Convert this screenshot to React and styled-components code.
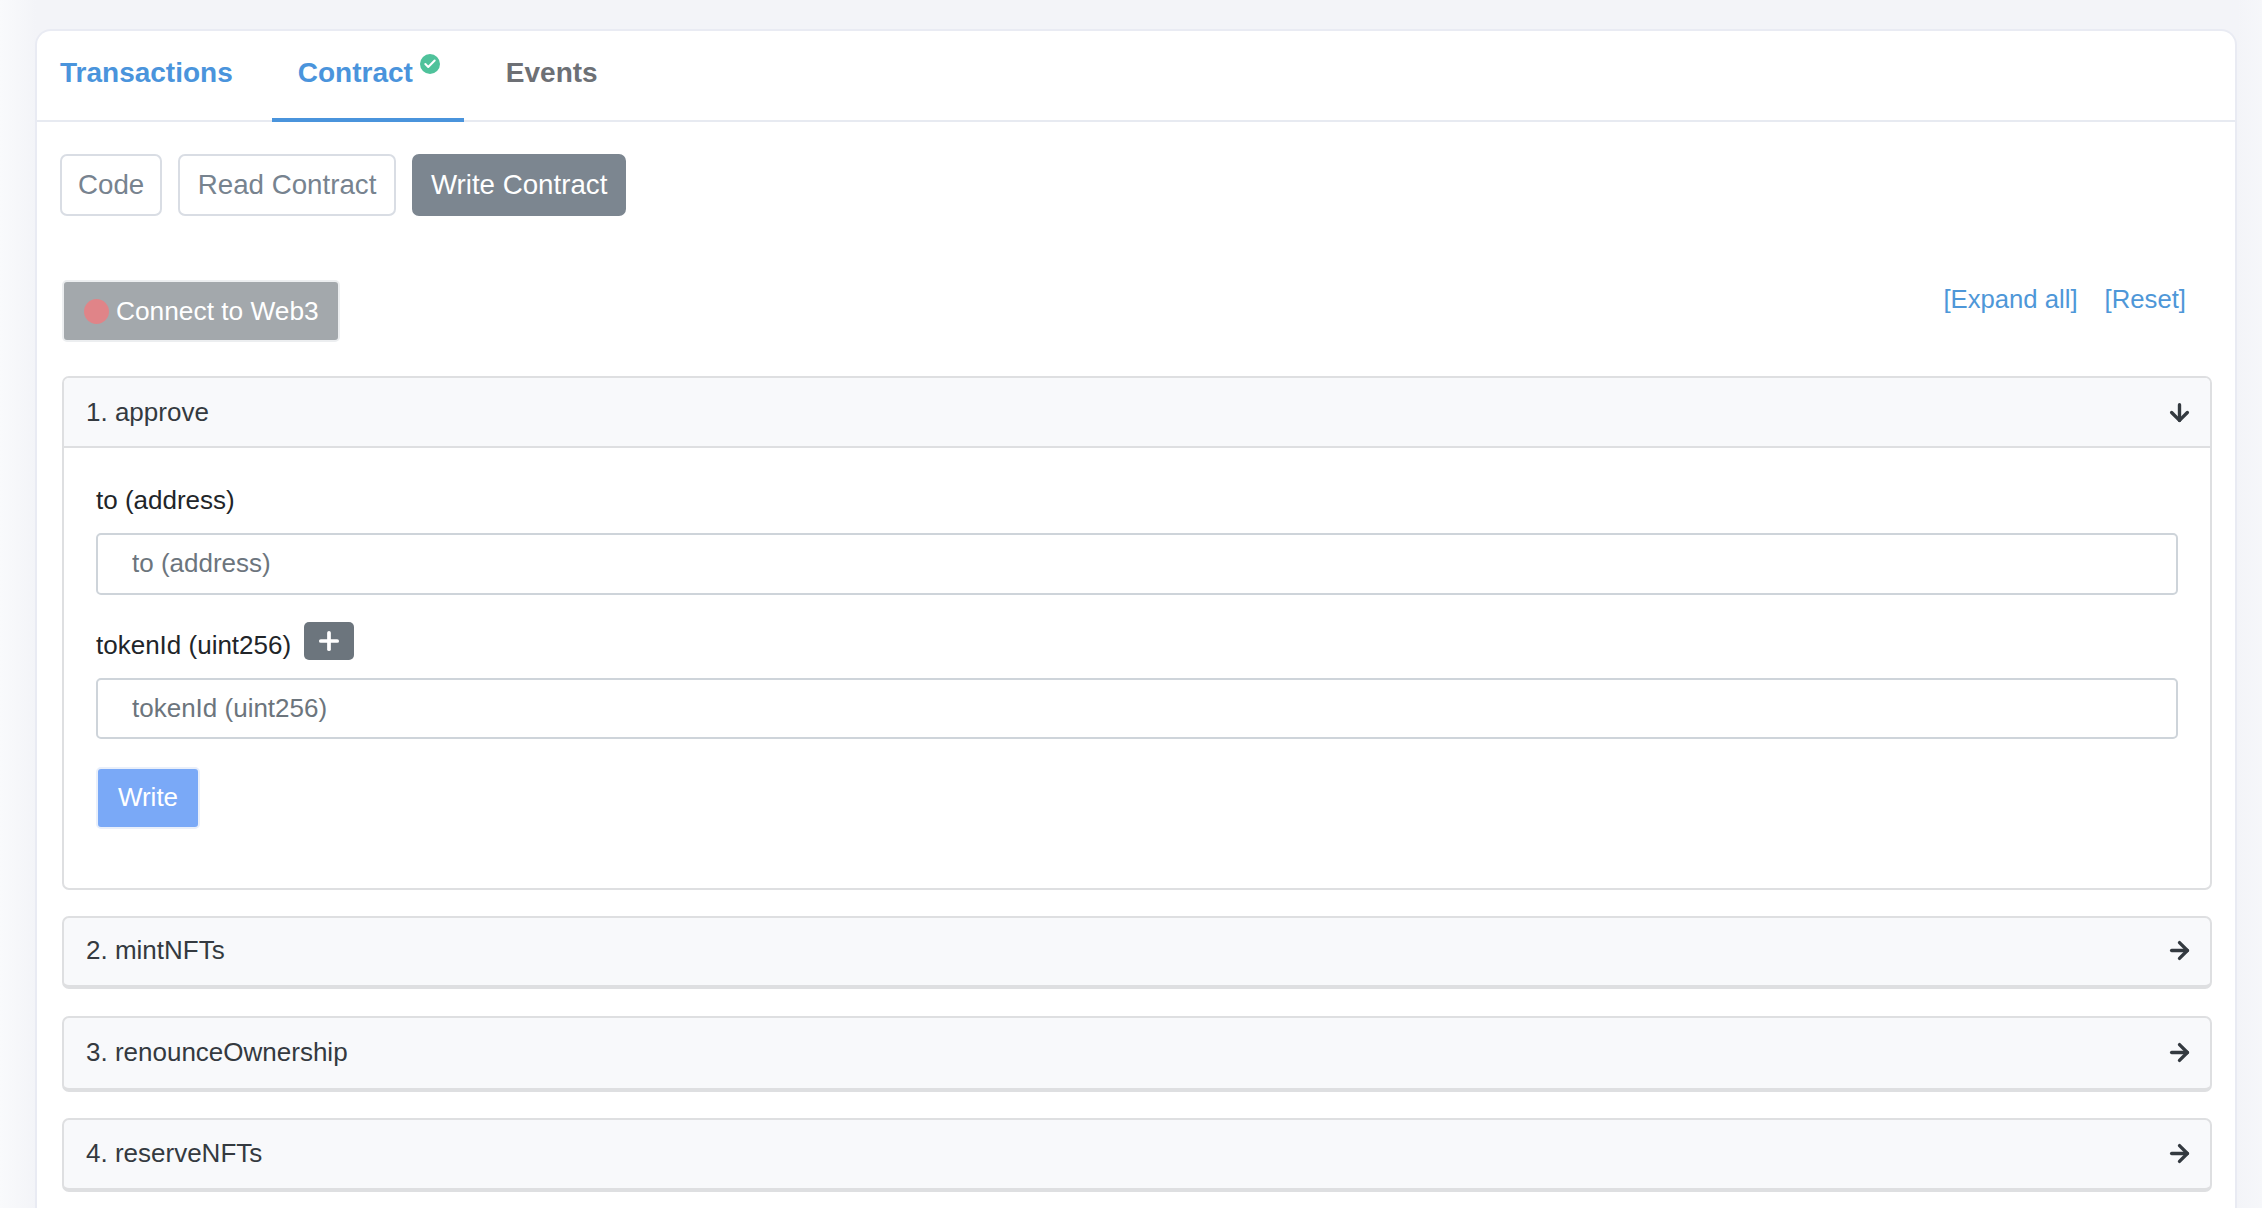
import React from "react"
import styled, { createGlobalStyle } from "styled-components"
import { ArrowDown, ArrowRight, Plus, Check } from "lucide-react"

const GlobalStyle = createGlobalStyle`
    html, body {
        margin: 0;
        height: 100%;
        overflow: hidden;
        background: #f3f4f8;
        font-family: "Liberation Sans", Arial, sans-serif;
    }
    * {
        box-sizing: border-box;
    }
`

const Page = styled.div`
    height: 1208px;
    padding: 29px 25px 0 35px;
    overflow: hidden;
    background: linear-gradient(90deg, #f9fafc 0, #f3f4f8 36px, #f3f4f8 2237px, #f6f7fa 100%);
`

const Card = styled.div`
    height: 1179px;
    background: #fff;
    border: 2px solid #e9ebf3;
    border-bottom: none;
    border-radius: 16px 16px 0 0;
`

const TabBar = styled.div`
    display: flex;
    gap: 16px;
    height: 91px;
    border-bottom: 2px solid #e7eaf1;
`

const Tab = styled.div`
    position: relative;
    display: flex;
    align-items: center;
    height: 91px;
    padding: 0 ${(p) => p.$right || 26}px 4px ${(p) => p.$left || 26}px;
    font-size: 28px;
    font-weight: 700;
    color: ${(p) => (p.$muted ? "#6d7075" : "#4a94dc")};
    border-bottom: 4px solid ${(p) => (p.$active ? "#4a94dc" : "transparent")};
`

const Badge = styled.span`
    position: absolute;
    top: 23px;
    left: 148px;
    width: 20px;
    height: 20px;
    border-radius: 50%;
    background: #4fc29b;
    display: flex;
    align-items: center;
    justify-content: center;
    color: #fff;
`

const BadgeSpace = styled.span`
    width: 25px;
`

const Body = styled.div`
    padding: 32px 23px 0 23px;
`

const ButtonRow = styled.div`
    display: flex;
    gap: 16px;
    margin-bottom: 64px;
`

const ViewButton = styled.div`
    height: 62px;
    padding: 0 ${(p) => p.$pad || 17}px;
    display: flex;
    align-items: center;
    font-size: 27.7px;
    border-radius: 7px;
    border: 2px solid ${(p) => (p.$active ? "#7c8690" : "#d9dde4")};
    background: ${(p) => (p.$active ? "#7c8690" : "#fff")};
    color: ${(p) => (p.$active ? "#fff" : "#77838f")};
`

const Section = styled.div`
    padding-left: 2px;
`

const ConnectRow = styled.div`
    display: flex;
    justify-content: space-between;
    align-items: flex-start;
    margin-bottom: 34px;
`

const ConnectButton = styled.div`
    width: 278px;
    height: 62px;
    display: flex;
    align-items: center;
    gap: 7px;
    padding-left: 20px;
    font-size: 26.3px;
    color: #fff;
    background: #a3a8ac;
    border: 2px solid #eceef0;
    border-radius: 5px;
`

const RedDot = styled.span`
    width: 25px;
    height: 25px;
    border-radius: 50%;
    background: #e08488;
`

const Links = styled.div`
    display: flex;
    gap: 27px;
    padding-right: 26px;
    font-size: 25.7px;
    line-height: 38px;
    color: #4e97d8;
`

const Panel = styled.div`
    border: 2px solid #dedfe1;
    border-bottom-width: ${(p) => (p.$open ? 2 : 4)}px;
    border-radius: 7px;
    background: ${(p) => (p.$open ? "#fff" : "#f8f9fb")};
    margin-bottom: ${(p) => p.$gap}px;
    height: ${(p) => (p.$height ? `${p.$height}px` : "auto")};
    display: ${(p) => (p.$open ? "block" : "flex")};
    align-items: center;
`

const PanelHead = styled.div`
    display: flex;
    flex: 1;
    justify-content: space-between;
    align-items: center;
    height: ${(p) => (p.$open ? "70px" : "auto")};
    padding: 0 17px ${(p) => (p.$open ? 0 : 2)}px 22px;
    font-size: 26px;
    color: #343a40;
    background: #f8f9fb;
    border-bottom: ${(p) => (p.$open ? "2px solid #dedfe1" : "none")};
    border-radius: 5px 5px 0 0;
`

const PanelBody = styled.div`
    padding: 37px 32px 59px 32px;
`

const LabelRow = styled.div`
    display: flex;
    align-items: flex-end;
    gap: 13px;
    margin-bottom: 18px;
`

const Label = styled.label`
    font-size: 26px;
    line-height: 28px;
    padding: 1px 0;
    color: #212529;
`

const AddButton = styled.div`
    width: 50px;
    height: 38px;
    border-radius: 5px;
    background: #6c757d;
    color: #fff;
    display: flex;
    align-items: center;
    justify-content: center;
`

const Input = styled.input`
    display: block;
    width: 100%;
    height: ${(p) => p.$height}px;
    padding: 0 34px ${(p) => p.$lift || 0}px;
    margin-bottom: ${(p) => p.$gap}px;
    font-family: inherit;
    font-size: 26px;
    border: 2px solid #ced4da;
    border-radius: 5px;
    outline: none;

    &::placeholder {
        color: #6c757d;
        opacity: 1;
    }
`

const WriteButton = styled.div`
    width: 104px;
    height: 62px;
    padding-bottom: 2px;
    display: flex;
    align-items: center;
    justify-content: center;
    font-size: 26px;
    color: #fff;
    background: #7aa9f7;
    border: 2px solid #e9effa;
    border-radius: 5px;
`

const collapsed = [
    { title: "2. mintNFTs", height: 73, gap: 27 },
    { title: "3. renounceOwnership", height: 76, gap: 26 },
    { title: "4. reserveNFTs", height: 74, gap: 26 },
]

const App = () => {
    return (
        <Page>
            <GlobalStyle />
            <Card>
                <TabBar>
                    <Tab $left={23} $right={23}>Transactions</Tab>
                    <Tab $active>
                        Contract
                        <Badge>
                            <Check size={14} strokeWidth={3.5} />
                        </Badge>
                        <BadgeSpace />
                    </Tab>
                    <Tab $muted>Events</Tab>
                </TabBar>
                <Body>
                    <ButtonRow>
                        <ViewButton $pad={16}>Code</ViewButton>
                        <ViewButton $pad={17.6}>Read Contract</ViewButton>
                        <ViewButton $active>Write Contract</ViewButton>
                    </ButtonRow>
                    <Section>
                        <ConnectRow>
                            <ConnectButton>
                                <RedDot />
                                Connect to Web3
                            </ConnectButton>
                            <Links>
                                <span>[Expand all]</span>
                                <span>[Reset]</span>
                            </Links>
                        </ConnectRow>
                        <Panel $open $gap={26}>
                            <PanelHead $open>
                                1. approve
                                <ArrowDown size={27} strokeWidth={3} color="#343a40" />
                            </PanelHead>
                            <PanelBody>
                                <LabelRow>
                                    <Label>to (address)</Label>
                                </LabelRow>
                                <Input placeholder="to (address)" $height={62} $gap={27} $lift={2} />
                                <LabelRow>
                                    <Label>tokenId (uint256)</Label>
                                    <AddButton>
                                        <Plus size={28} strokeWidth={3.2} />
                                    </AddButton>
                                </LabelRow>
                                <Input placeholder="tokenId (uint256)" $height={61} $gap={28} />
                                <WriteButton>Write</WriteButton>
                            </PanelBody>
                        </Panel>
                        {collapsed.map((item) => (
                            <Panel key={item.title} $height={item.height} $gap={item.gap}>
                                <PanelHead>
                                    {item.title}
                                    <ArrowRight size={27} strokeWidth={3} color="#343a40" />
                                </PanelHead>
                            </Panel>
                        ))}
                    </Section>
                </Body>
            </Card>
        </Page>
    )
}

export default App
